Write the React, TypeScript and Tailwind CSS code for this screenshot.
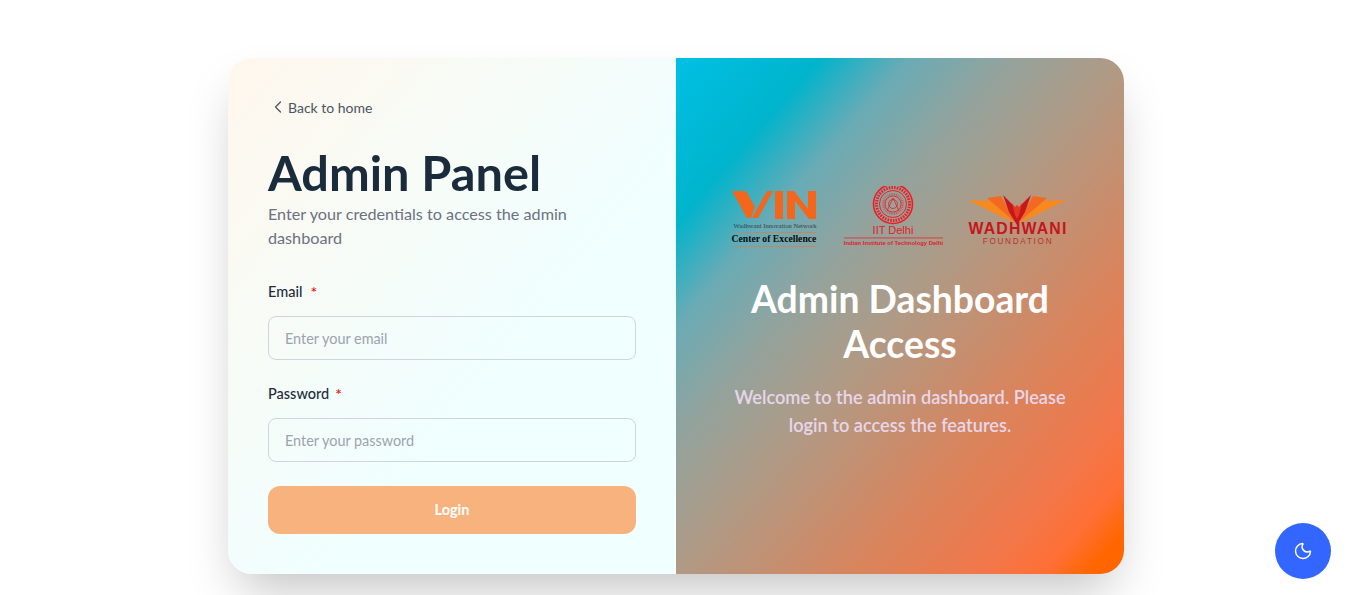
import { ChevronLeft, Moon } from "lucide-react";

const serif = "'Liberation Serif', serif";
const sans = "'Liberation Sans', sans-serif";

function WinLogo() {
  return (
    <svg width="90" height="64" viewBox="0 0 90 64" className="shrink-0">
      <polygon points="3,5 17,5 26,21 22,32 18,32" fill="#f4661b" />
      <polygon points="23,32 38,5 44,5 29,32" fill="#f4661b" />
      <rect x="46" y="5" width="8" height="28" fill="#f4661b" />
      <polygon points="58,5 65,5 79,23 79,5 87,5 87,33 80,33 66,15 66,33 58,33" fill="#f4661b" />
      <text x="46" y="41.5" textAnchor="middle" fontSize="6.6" fontFamily={serif} fill="#33424a">Wadhwani Innovation Network</text>
      <rect x="4" y="46" width="83" height="0.8" fill="#c9825c" />
      <text x="45" y="55.5" textAnchor="middle" fontSize="9.7" fontWeight="700" fontFamily={serif} fill="#0a0a0a">Center of Excellence</text>
      <rect x="4" y="60" width="83" height="0.8" fill="#c9825c" />
    </svg>
  );
}

function IitLogo() {
  const ticks = Array.from({ length: 36 }, (_, i) => (i * 360) / 36);
  return (
    <svg width="104" height="64" viewBox="0 0 104 64" className="shrink-0">
      <g fill="none" stroke="#ee1c25">
        <circle cx="52" cy="18" r="19.5" strokeWidth="1.6" />
        <circle cx="52" cy="18" r="13.5" strokeWidth="1" />
        <circle cx="52" cy="18" r="8" strokeWidth="0.8" />
        <circle cx="52" cy="18" r="4.5" strokeWidth="0.8" />
        <circle cx="52" cy="18" r="16.5" strokeWidth="3" strokeDasharray="1.6 1.1" />
        {ticks.map((a) => (
          <line key={a} x1="52" y1="7" x2="52" y2="9.5" strokeWidth="0.5" transform={`rotate(${a} 52 18)`} />
        ))}
        <path d="M46 25 L52 12 L58 25" strokeWidth="0.8" />
      </g>
      <text x="52" y="47.5" textAnchor="middle" fontSize="11" fontFamily={sans} fill="#e0202a">IIT Delhi</text>
      <rect x="3" y="51.5" width="99" height="0.9" fill="#e0303a" />
      <text x="52.5" y="59" textAnchor="middle" fontSize="5.9" fontWeight="700" fontFamily={sans} fill="#e0202a">Indian Institute of Technology Delhi</text>
    </svg>
  );
}

function WadhwaniLogo() {
  return (
    <svg width="104" height="64" viewBox="0 0 104 64" className="shrink-0">
      <polygon points="1,14 28,15 47,37" fill="#f7891e" />
      <polygon points="20,12 34,10 49,37" fill="#f26a21" />
      <polygon points="99,14 72,15 53,37" fill="#f7891e" />
      <polygon points="80,12 66,10 51,37" fill="#f26a21" />
      <polygon points="36,9 45,18 50,25 55,18 64,9 58,26 50,39 42,26" fill="#c8161d" />
      <polygon points="45,17 48,21 50,19 52,21 55,17 52,29 50,33 48,29" fill="#e23a1f" />
      <text x="51" y="48" textAnchor="middle" fontSize="15.8" fontWeight="700" letterSpacing="1.2" fontFamily={sans} fill="#c4161c">WADHWANI</text>
      <text x="51" y="58" textAnchor="middle" fontSize="8.2" letterSpacing="1.7" fontFamily={sans} fill="#b8322c">FOUNDATION</text>
    </svg>
  );
}

export default function App() {
  return (
    <div className="relative h-[595px] overflow-hidden bg-white pt-[58px] font-['Lato',sans-serif]">
      <div className="mx-auto flex h-[516px] w-[896px] overflow-hidden rounded-[24px] shadow-[0_25px_50px_-12px_rgba(0,0,0,0.25)]">
        <div className="flex w-1/2 flex-col bg-[linear-gradient(to_bottom_right,#fff7ed_0%,#f0ffff_60%,#f0ffff_100%)] px-10 pt-[39px]">
          <a className="flex h-5 items-center text-[14px] text-[#4b5563]">
            <ChevronLeft size={20} strokeWidth={1.5} />
            <span>Back to home</span>
          </a>
          <h1 className="mt-[25px] text-[48.7px] leading-[60px] font-bold text-[#1a2b3c]">Admin Panel</h1>
          <p className="text-[16.2px] leading-6 text-[#6b7280]">
            Enter your credentials to access the admin dashboard
          </p>
          <label className="mt-[32px] flex h-5 items-center text-[14.5px] font-medium text-[#1f2d3d]">
            Email<span className="ml-[8px] text-[16px] text-[#ef1111]">*</span>
          </label>
          <input
            placeholder="Enter your email"
            className="mt-[14px] h-11 w-full rounded-lg border border-[#d1d5db] bg-transparent px-4 text-[14.4px] text-[#1f2d3d] placeholder:text-[#9ca3af]"
          />
          <label className="mt-[24px] flex h-5 items-center text-[14.5px] font-medium text-[#1f2d3d]">
            Password<span className="ml-[6px] text-[16px] text-[#ef1111]">*</span>
          </label>
          <input
            placeholder="Enter your password"
            className="mt-[14px] h-11 w-full rounded-lg border border-[#d1d5db] bg-transparent px-4 text-[14.4px] text-[#1f2d3d] placeholder:text-[#9ca3af]"
          />
          <button className="mt-6 h-12 w-full rounded-xl bg-[#f7b27e] text-[14.5px] font-bold text-white">Login</button>
        </div>
        <div className="flex w-1/2 flex-col items-center bg-[linear-gradient(to_bottom_right,#00c0e4_0%,#00b4cc_16%,#6aabb5_26%,#93a39d_37%,#b09a85_50%,#d9845c_70%,#f2774a_84%,#ff6f35_91%,#ff6600_96%)] pt-[128px] text-center">
          <div className="flex gap-[22px]">
            <WinLogo />
            <IitLogo />
            <WadhwaniLogo />
          </div>
          <h2 className="mt-[26px] w-[360px] text-[37.3px] leading-[45px] font-bold text-white">Admin Dashboard Access</h2>
          <p className="mt-[17px] w-[350px] text-[18.2px] leading-7 font-semibold text-[#e8d6ea]">
            Welcome to the admin dashboard. Please login to access the features.
          </p>
        </div>
      </div>
      <button className="absolute right-[21px] bottom-[16px] flex h-14 w-14 items-center justify-center rounded-full bg-[#3366ff] text-white">
        <Moon size={20} strokeWidth={1.75} />
      </button>
    </div>
  );
}
